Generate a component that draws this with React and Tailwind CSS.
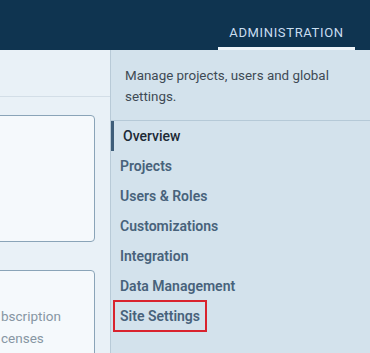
export default function App() {
  const navItems = ['Projects', 'Users & Roles', 'Customizations', 'Integration', 'Data Management'];

  return (
    <div className="w-[370px] h-[353px] overflow-hidden flex flex-col font-['Roboto',sans-serif]">
      {/* Top bar */}
      <div className="h-[50px] shrink-0 bg-[#0f3450] flex justify-end items-end pr-[15px]">
        <div className="w-[137px] h-[50px] flex items-center justify-center pt-[19px] border-b-[3px] border-[#eef5fa]">
          <span className="text-[13px] tracking-[0.05em] text-[#c9def0]">ADMINISTRATION</span>
        </div>
      </div>

      <div className="flex-1 flex min-h-0">
        {/* Page behind the menu */}
        <div className="w-[110px] shrink-0 bg-[#e9f1f7] flex flex-col overflow-hidden">
          <div className="h-[47px] shrink-0 border-b border-[#d3dee7]" />
          <div className="mt-[18px] h-[127px] w-[101px] shrink-0 -ml-[6px] bg-[#f5f9fc] border border-[#8aa4b8] rounded-[4px]" />
          <div className="mt-[28px] h-[120px] w-[101px] shrink-0 -ml-[6px] bg-[#f5f9fc] border border-[#8aa4b8] rounded-[4px]">
            <div className="pt-[34px] pl-[6px] text-[13.5px] leading-[22px] text-[#8796a3] whitespace-nowrap">
              <div>bscription</div>
              <div>censes</div>
            </div>
          </div>
        </div>

        {/* Administration menu */}
        <div className="flex-1 bg-[#d3e2ec] border-l border-[#b8cad7] flex flex-col">
          <p className="px-[14px] pt-[15px] pb-[13px] text-[13.4px] leading-[21px] text-[#3e4a55] border-b border-[#b5c9d7]">
            Manage projects, users and global settings.
          </p>
          <nav className="flex flex-col">
            <div className="h-[30px] flex items-center border-l-[3px] border-[#3e5d79] pl-[9px] text-[14px] font-medium text-[#1c2a36]">
              Overview
            </div>
            {navItems.map((item) => (
              <div key={item} className="h-[30px] flex items-center pl-[9px] text-[14px] font-semibold text-[#48627b]">
                {item}
              </div>
            ))}
            <div className="h-[30px] flex items-center pl-[2px]">
              <span className="h-[32px] flex items-center px-[5px] border-2 border-[#d9232e] text-[14px] font-semibold text-[#48627b]">
                Site Settings
              </span>
            </div>
          </nav>
        </div>
      </div>
    </div>
  );
}
